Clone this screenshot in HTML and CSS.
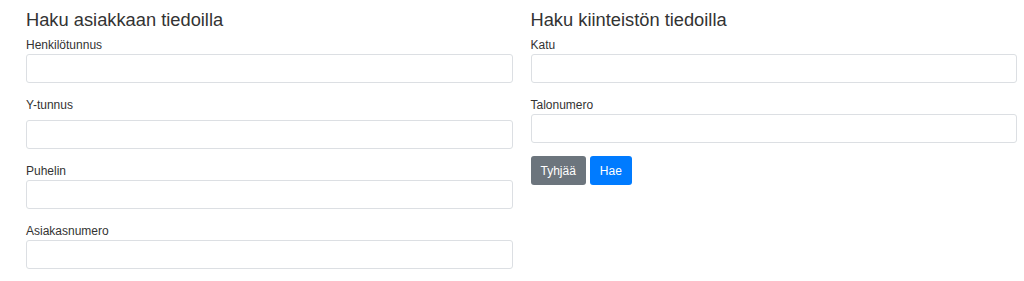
FILE: index.html
```html
<!DOCTYPE html>
<html lang="fi">
<head>
  <meta charset="UTF-8">
  <meta name="viewport" content="width=device-width, initial-scale=1.0">
  <title>Haku</title>
  <link rel="stylesheet" href="styles.css">
</head>
<body>
  <div class="search-page">
    <!-- Asiakashaku -->
    <form class="search-form">
      <h2 class="form-title">Haku asiakkaan tiedoilla</h2>
      <div class="form-group">
        <label class="form-label" for="hetu">Henkilötunnus</label>
        <input class="form-input" id="hetu" type="text">
      </div>
      <div class="form-group">
        <label class="form-label form-label-spaced" for="ytunnus">Y-tunnus</label>
        <input class="form-input" id="ytunnus" type="text">
      </div>
      <div class="form-group">
        <label class="form-label" for="puhelin">Puhelin</label>
        <input class="form-input" id="puhelin" type="text">
      </div>
      <div class="form-group">
        <label class="form-label" for="asiakasnumero">Asiakasnumero</label>
        <input class="form-input" id="asiakasnumero" type="text">
      </div>
    </form>

    <!-- Kiinteistöhaku -->
    <form class="search-form">
      <h2 class="form-title">Haku kiinteistön tiedoilla</h2>
      <div class="form-group">
        <label class="form-label" for="katu">Katu</label>
        <input class="form-input" id="katu" type="text">
      </div>
      <div class="form-group">
        <label class="form-label" for="talonumero">Talonumero</label>
        <input class="form-input" id="talonumero" type="text">
      </div>
      <div class="form-actions">
        <button class="btn btn-secondary" type="reset">Tyhjää</button>
        <button class="btn btn-primary" type="submit">Hae</button>
      </div>
    </form>
  </div>
</body>
</html>
```

FILE: styles.css
```css
/* Reset and base styles */
* {
  box-sizing: border-box;
  margin: 0;
  padding: 0;
}

html, body {
  font-family: 'Liberation Sans', Arial, sans-serif;
  color: #333;
  background: #fff;
}

/* Two search forms side by side */
.search-page {
  display: grid;
  grid-template-columns: 1fr 1fr;
  gap: 18px;
  padding: 9px 7px 0 26px;
}

.search-form {
  display: flex;
  flex-direction: column;
}

.form-title {
  font-size: 18.3px;
  font-weight: 400;
  line-height: 22px;
  color: #333;
  margin-bottom: 5px;
}

.form-group {
  display: flex;
  flex-direction: column;
  margin-bottom: 13px;
}

.form-label {
  font-size: 12px;
  line-height: 18px;
  color: #333;
}

.form-label-spaced {
  margin-bottom: 6px;
}

.form-input {
  height: 29px;
  width: 100%;
  border: 1px solid #dcdfe3;
  border-radius: 3px;
  padding: 0 8px;
  font: inherit;
  font-size: 12px;
  background: #fff;
}

/* Buttons */
.form-actions {
  display: flex;
  gap: 4px;
}

.btn {
  height: 29px;
  padding: 0 10px;
  border: none;
  border-radius: 3px;
  font-family: inherit;
  font-size: 12px;
  color: #fff;
  cursor: pointer;
}

.btn-secondary {
  background-color: #6c757d;
}

.btn-primary {
  background-color: #007bff;
}
```
